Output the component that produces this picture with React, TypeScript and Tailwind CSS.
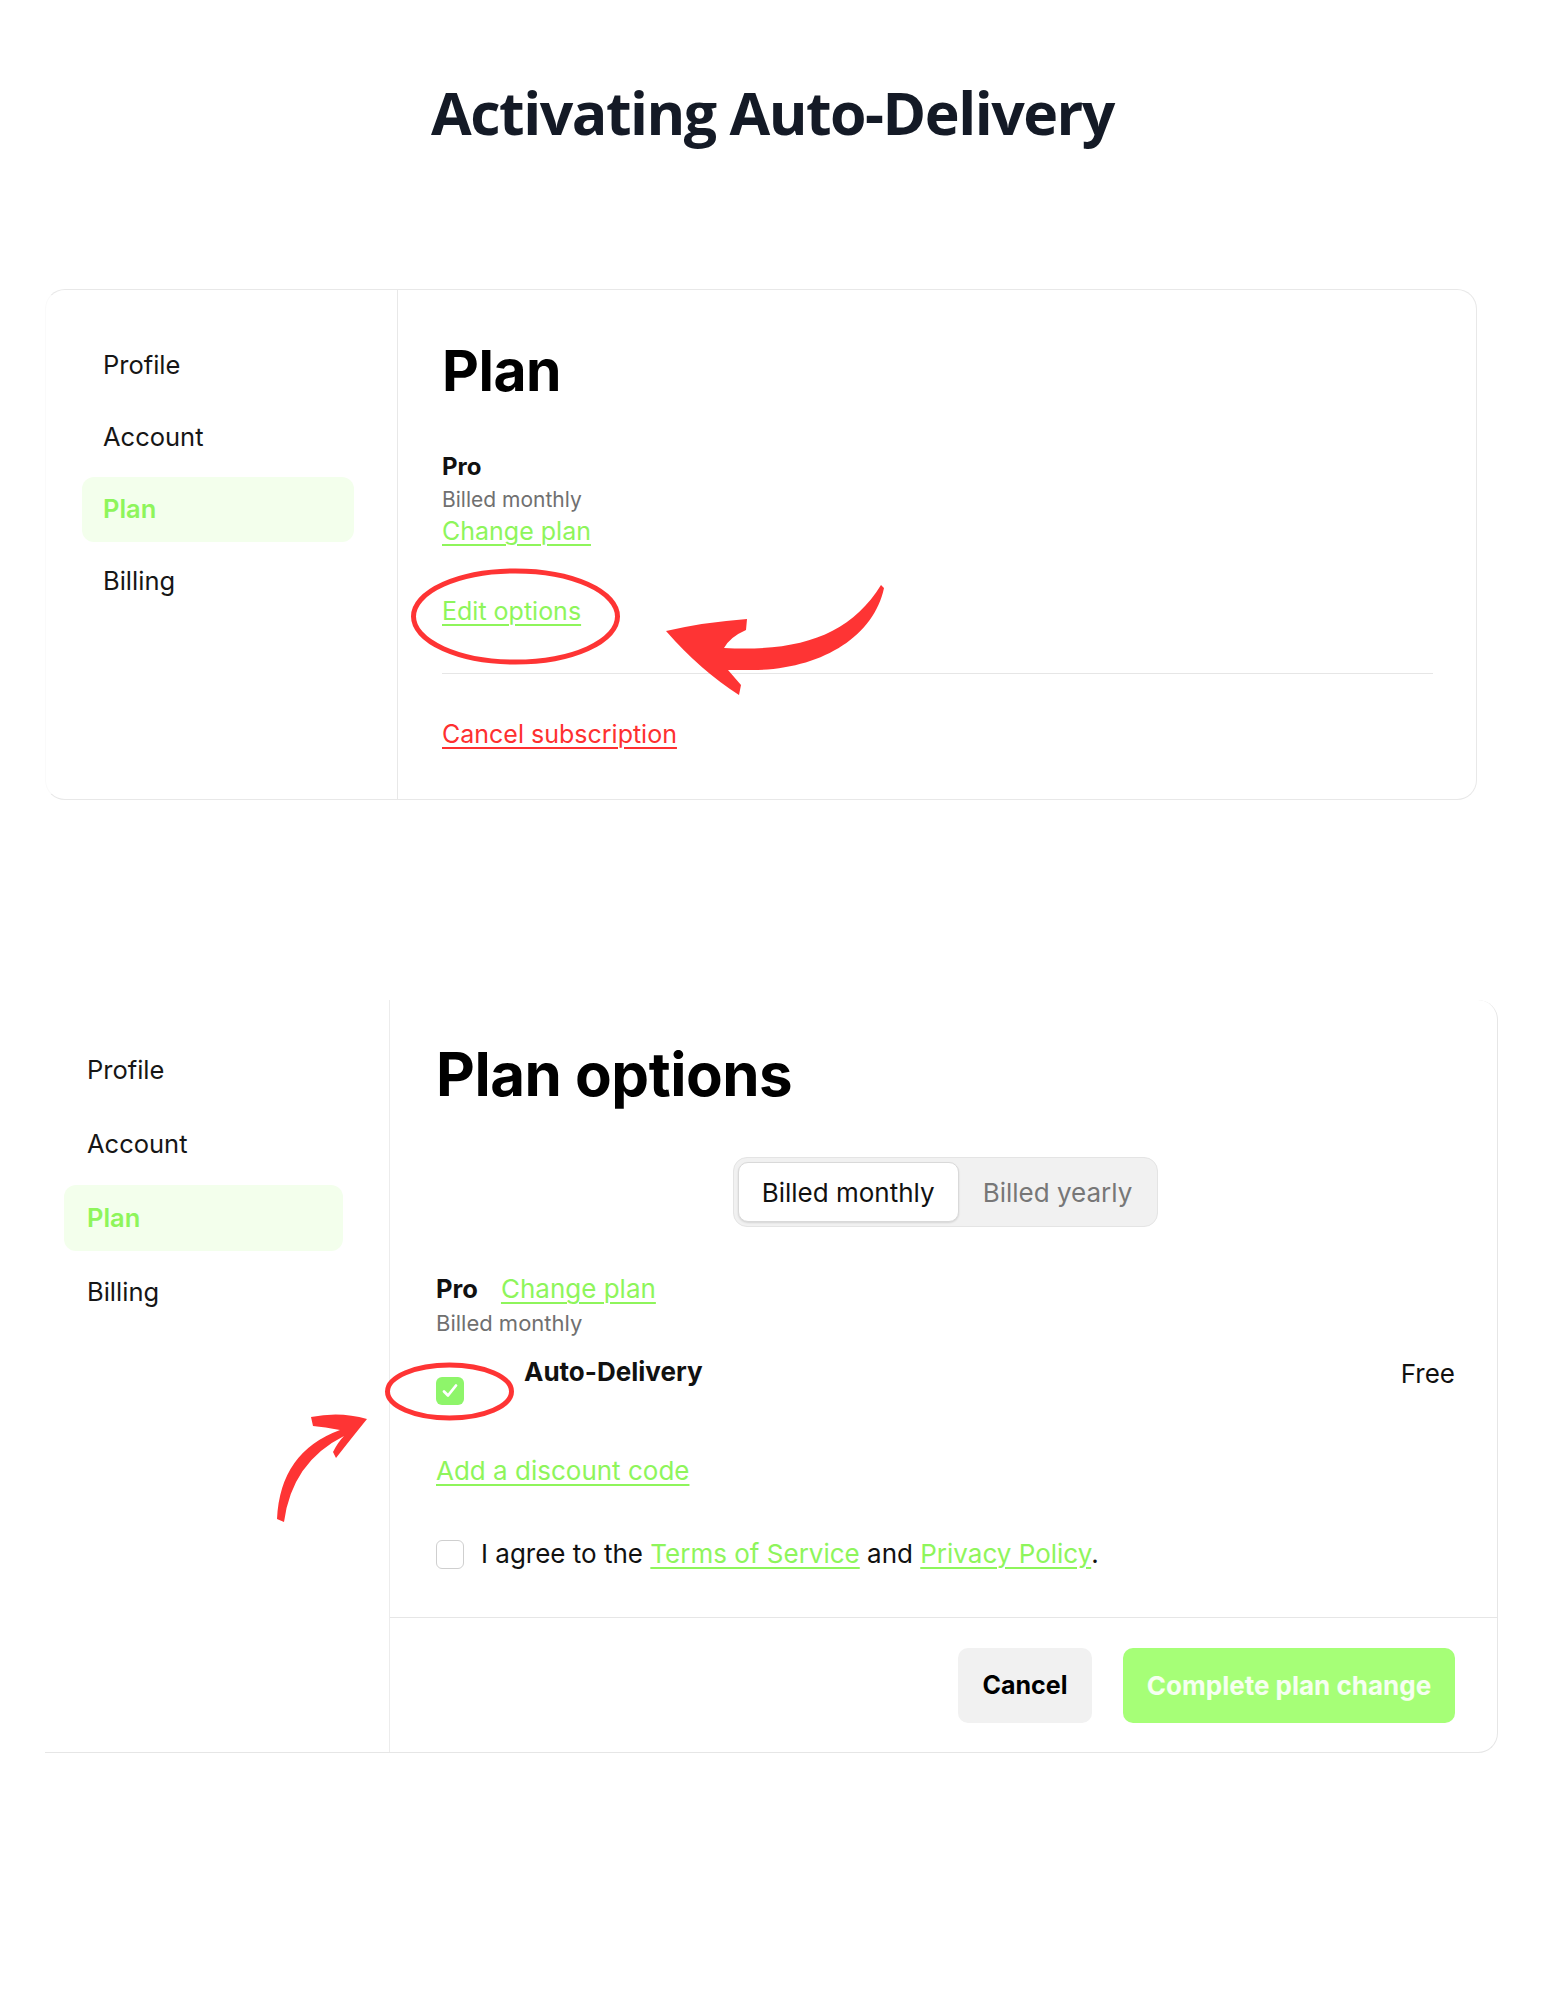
import React from "react";

const green = "text-[#8ef55b] underline decoration-[#8ef55b] decoration-[1.5px] underline-offset-[4px]";

function SideNav({ variant }: { variant: 1 | 2 }) {
  const items = ["Profile", "Account", "Plan", "Billing"];
  const one = variant === 1;
  return (
    <nav
      className={
        one
          ? "flex w-[352px] shrink-0 flex-col gap-[7px] border-r border-[#e8e8e8] pt-[43px] pl-[36px] pr-[43px]"
          : "flex w-[345px] shrink-0 flex-col gap-[8px] border-r border-[#ececec] pt-[37px] pl-[19px] pr-[46px]"
      }
    >
      {items.map((item) => {
        const active = item === "Plan";
        return (
          <div
            key={item}
            className={`flex items-center rounded-[12px] text-[25.5px] ${one ? "h-[65px] pl-[21px]" : "h-[66px] pl-[23px]"} ${
              active ? "bg-[#f3ffec] font-semibold text-[#8ef55b]" : "text-[#161616]"
            }`}
          >
            {item}
          </div>
        );
      })}
    </nav>
  );
}

function Arrows() {
  return (
    <svg className="pointer-events-none absolute left-0 top-0" width="1545" height="2000" viewBox="0 0 1545 2000">
      <ellipse cx="515.5" cy="616.5" rx="102" ry="45.5" fill="none" stroke="#fe3434" strokeWidth="5" />
      <path
        d="M 666 631 Q 705 622 747 619 L 746 630 Q 730 637 724 648 C 800 652 850 635 881 585 L 884 588 C 873 640 815 672 745 670 L 728 670 L 741 685 L 739 695 Q 700 670 666 631 Z"
        fill="#fe3434"
      />
      <ellipse cx="449.5" cy="1391.5" rx="62" ry="26.5" fill="none" stroke="#fe3434" strokeWidth="5" />
      <path
        d="M 311 1417 Q 340 1411 367 1419 Q 350 1440 336 1458 L 333 1452 Q 338 1442 344 1436 Q 292 1462 284 1522 L 277 1519 Q 280 1452 340 1430 Q 325 1427 313 1426 Z"
        fill="#fe3434"
      />
    </svg>
  );
}

export default function App() {
  return (
    <div className="relative min-h-[2000px] w-full bg-white font-['Inter',sans-serif] text-[#111]">
      <h1 className="pt-[83px] text-center font-['Open_Sans',sans-serif] text-[59px] font-bold leading-none tracking-[-1.5px] text-[#141a26]">
        Activating Auto-Delivery
      </h1>

      {/* first screen: plan summary */}
      <section className="mt-[147px] ml-[45px] flex h-[511px] w-[1432px] rounded-[20px] border border-[#e8e8e8] border-l-[#fafafa]">
        <SideNav variant={1} />
        <div className="flex-1 pt-[52px] pl-[44px] pr-[43px]">
          <h2 className="text-[57px] font-bold leading-none tracking-[-0.5px] text-black">Plan</h2>
          <div className="mt-[54px] text-[24px] font-bold leading-[28px]">Pro</div>
          <div className="mt-[7px] text-[21px] leading-[24px] text-[#707070]">Billed monthly</div>
          <div className="mt-[5px] text-[25px] leading-[28px]">
            <span className={green}>Change plan</span>
          </div>
          <div className="mt-[52px] text-[25px] leading-[28px]">
            <span className={green}>Edit options</span>
          </div>
          <div className="mt-[48px] border-t border-[#e6e6e6]" />
          <div className="mt-[46px] text-[25px] leading-[28px]">
            <span className="text-[#fe3030] underline decoration-[1.5px] underline-offset-[4px]">Cancel subscription</span>
          </div>
        </div>
      </section>

      {/* second screen: plan options */}
      <section className="mt-[200px] ml-[45px] flex h-[753px] w-[1453px] rounded-r-[20px] border-r border-b border-[#e6e6e6]">
        <SideNav variant={2} />
        <div className="flex flex-1 flex-col">
          <div className="flex-1 pt-[44px] pl-[46px] pr-[42px]">
            <h2 className="text-[60px] font-bold leading-none tracking-[-0.5px] text-black">Plan options</h2>
            <div className="mt-[53px] flex justify-center">
              <div className="flex h-[70px] items-center rounded-[14px] border border-[#e4e4e4] bg-[#f1f1f1] p-[4px] text-[26px]">
                <div className="flex h-[60px] items-center rounded-[10px] border border-[#d9d9d9] bg-white px-[23px] text-[#111] shadow-[0_1px_2px_rgba(0,0,0,0.12)]">
                  Billed monthly
                </div>
                <div className="flex h-[60px] items-center pl-[24px] pr-[21px] text-[#777]">Billed yearly</div>
              </div>
            </div>
            <div className="mt-[48px] flex items-baseline gap-[23px] leading-[28px]">
              <span className="text-[25.5px] font-bold">Pro</span>
              <span className={`text-[26px] ${green}`}>Change plan</span>
            </div>
            <div className="mt-[8px] text-[22px] leading-[24px] text-[#707070]">Billed monthly</div>
            <div className="mt-[23px] flex items-start">
              <div className="mt-[19px] flex h-[28px] w-[28px] items-center justify-center rounded-[6px] bg-[#8ef56a]">
                <svg width="20" height="20" viewBox="0 0 20 20" fill="none">
                  <path d="M4 10.5 L8 14.5 L16 4.5" stroke="white" strokeWidth="2.8" strokeLinecap="round" strokeLinejoin="round" />
                </svg>
              </div>
              <span className="ml-[60px] text-[26px] font-bold leading-[28px]">Auto-Delivery</span>
              <span className="ml-auto mt-[2px] text-[26px] leading-[28px]">Free</span>
            </div>
            <div className="mt-[52px] text-[26px] leading-[28px]">
              <span className={green}>Add a discount code</span>
            </div>
            <div className="mt-[55px] flex items-start gap-[17px] text-[26px] leading-[28px]">
              <div className="h-[29px] w-[28px] shrink-0 rounded-[6px] border-[1.5px] border-[#cfcfcf] bg-white" />
              <p>
                I agree to the <span className={green}>Terms of Service</span> and{" "}
                <span className={green}>Privacy Policy</span>.
              </p>
            </div>
          </div>
          <div className="flex justify-end gap-[31px] border-t border-[#e6e6e6] pt-[30px] pb-[29px] pr-[42px]">
            <button className="h-[75px] w-[134px] rounded-[10px] bg-[#f1f1f1] text-[25px] font-bold text-black">
              Cancel
            </button>
            <button className="h-[75px] w-[332px] rounded-[10px] bg-[#a6ff77] text-[26px] font-bold text-white/90">
              Complete plan change
            </button>
          </div>
        </div>
      </section>

      <Arrows />
    </div>
  );
}
